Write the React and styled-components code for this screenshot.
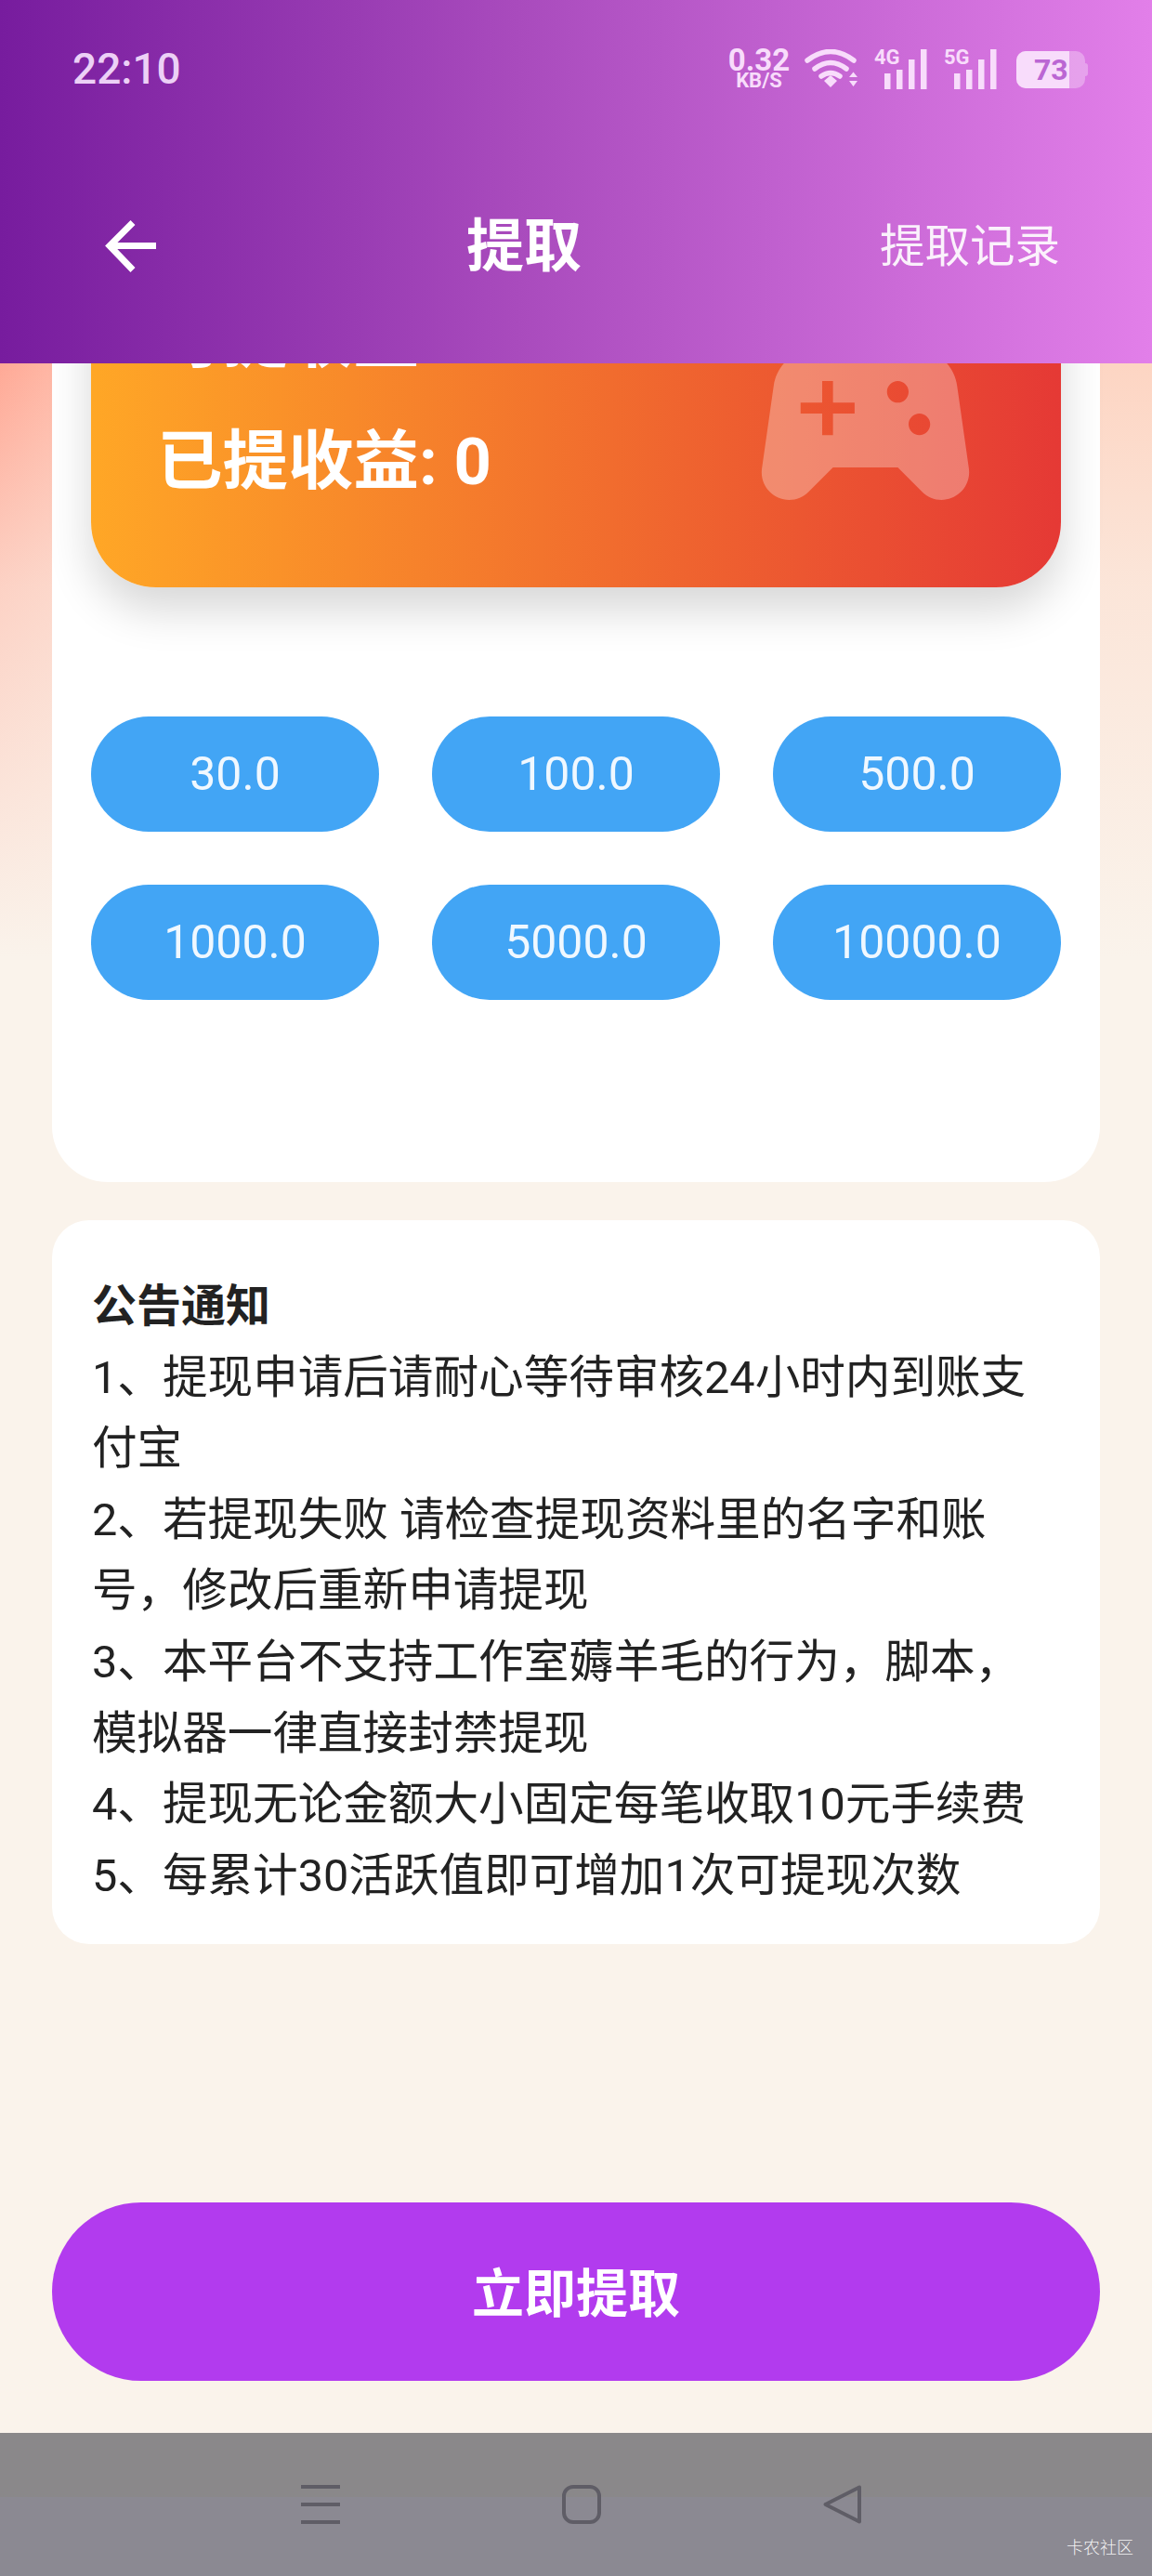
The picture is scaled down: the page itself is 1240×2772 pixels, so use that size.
import React from 'react';
import styled, { createGlobalStyle } from 'styled-components';

const Global = createGlobalStyle`
  html, body { margin: 0; padding: 0; background: #faf3eb; }
  * { box-sizing: border-box; }
`;

const FONT = `Roboto, "Noto Sans CJK SC", sans-serif`;

const Page = styled.div`
  width: 1240px;
  height: 2772px;
  overflow: hidden;
  display: flex;
  flex-direction: column;
  position: relative;
  font-family: ${FONT};
  background: #faf3eb;
`;

const Header = styled.header`
  height: 391px;
  flex: none;
  position: relative;
  z-index: 2;
  background: linear-gradient(to right, #771c9e 0%, #a94bbd 45%, #e27fe9 100%);
  display: flex;
  flex-direction: column;
`;

const StatusBar = styled.div`
  height: 148px;
  padding: 0 72px 0 78px;
  display: flex;
  align-items: center;
  justify-content: space-between;
  color: #f8dcfb;
`;

const Time = styled.div`
  font-size: 46px;
  font-weight: 500;
  line-height: 1;
  color: #ecd0f6;
`;

const StatusIcons = styled.div`
  display: flex;
  align-items: flex-end;
  height: 44px;
`;

const Speed = styled.div`
  width: 72px;
  margin-right: 13px;
  display: flex;
  flex-direction: column;
  align-items: center;
  font-weight: 700;
  line-height: 1;
`;

const SpeedValue = styled.span`
  font-size: 33px;
  height: 26px;
  line-height: 26px;
`;

const SpeedUnit = styled.span`
  font-size: 22px;
  height: 18px;
  line-height: 18px;
`;

const Signal = styled.div`
  position: relative;
  width: 57px;
  height: 43px;
  margin-left: ${p => p.$gap}px;
`;

const SignalLabel = styled.span`
  position: absolute;
  left: 0;
  top: -2px;
  font-size: 22px;
  line-height: 22px;
  font-weight: 700;
`;

const Battery = styled.div`
  position: relative;
  margin-left: 21px;
  width: 74px;
  height: 40px;
  margin-bottom: 1px;
  border-radius: 10px;
  background: rgba(255, 255, 255, 0.3);
  display: flex;
  align-items: center;
  padding-left: 19px;
`;

const BatteryFill = styled.div`
  position: absolute;
  left: 0;
  top: 0;
  bottom: 0;
  border-radius: 10px 0 0 10px;
  background: #f8dcfb;
`;

const BatteryNub = styled.div`
  position: absolute;
  left: 74px;
  top: 13px;
  width: 3px;
  height: 14px;
  border-radius: 0 3px 3px 0;
  background: rgba(255, 255, 255, 0.3);
`;

const BatteryText = styled.span`
  position: relative;
  font-size: 32px;
  font-weight: 700;
  line-height: 1;
  color: #bb66d3;
`;

const TitleBar = styled.div`
  height: 234px;
  padding: 0 99px 0 113px;
  display: flex;
  align-items: center;
  justify-content: space-between;
  color: #fff;
`;

const BackButton = styled.button`
  width: 68px;
  height: 56px;
  padding: 0;
  border: 0;
  background: none;
  color: #fff;
  display: flex;
`;

const Title = styled.h1`
  margin: 0;
  padding-top: 2px;
  font-size: 62px;
  font-weight: 700;
  line-height: 1;
`;

const RecordLink = styled.span`
  font-size: 48.5px;
  font-weight: 400;
  line-height: 1;
  padding-top: 3px;
  color: rgba(255, 255, 255, 0.9);
`;

const Scroll = styled.main`
  flex: 1;
  min-height: 0;
  overflow: hidden;
  position: relative;
  padding: 0 56px;
  background:
    linear-gradient(to bottom, rgba(250, 243, 235, 0) 0, rgba(250, 243, 235, 0.55) 240px, #faf3eb 640px),
    linear-gradient(to right, #ffa996 0, #ffb6a4 56px, #fdd5c3 1184px, #fdd5c3 100%);
`;

const ScrollInner = styled.div`
  margin-top: -181px;
  display: flex;
  flex-direction: column;
`;

const WithdrawPanel = styled.section`
  background: #fff;
  border-radius: 60px;
  padding: 40px 42px 196px;
`;

const EarningsCard = styled.div`
  position: relative;
  height: 382px;
  border-radius: 70px;
  padding: 75px 0 0 71px;
  background: linear-gradient(to right, #ffa726 0%, #e53935 100%);
  box-shadow: 0 24px 48px rgba(0, 0, 0, 0.16);
  color: #fff;
  display: flex;
  flex-direction: column;
  gap: 49px;
`;

const EarningsLine = styled.div`
  font-size: 70.5px;
  font-weight: 700;
  line-height: 82px;
`;

const GameIcon = styled.svg`
  position: absolute;
  right: 71px;
  bottom: 36px;
  width: 279px;
  height: 279px;
  fill: rgba(255, 255, 255, 0.3);
`;

const Amounts = styled.div`
  margin-top: 139px;
  display: grid;
  grid-template-columns: repeat(3, 310px);
  justify-content: space-between;
  row-gap: 57px;
`;

const Amount = styled.button`
  height: 124px;
  border: 0;
  border-radius: 62px;
  background: #42a5f5;
  color: rgba(255, 255, 255, 0.92);
  font-family: ${FONT};
  font-size: 50px;
  font-weight: 400;
  padding: 0;
`;

const NoticePanel = styled.section`
  margin-top: 41px;
  background: #fff;
  border-radius: 40px;
  padding: 55px 54px 35px 43px;
  color: #222;
  font-size: 48.6px;
  line-height: 76.6px;
`;

const NoticeTitle = styled.h2`
  margin: 0;
  font-size: 48px;
  line-height: 76.6px;
  font-weight: 700;
`;

const NoticeLine = styled.p`
  margin: 0;
`;

const SubmitButton = styled.button`
  display: block;
  width: 100%;
  height: 192px;
  margin-top: 278px;
  border: 0;
  border-radius: 96px;
  background: #b23bee;
  color: #fff;
  font-family: ${FONT};
  font-size: 56px;
  font-weight: 700;
  padding: 0 0 5px;
`;

const NavBar = styled.nav`
  flex: none;
  height: 154px;
  position: relative;
  padding: 56px 0 0 324px;
  display: flex;
  align-items: flex-start;
  gap: 239px;
  background: linear-gradient(to bottom, #8a888a 0, #8a888a 69px, #8b8992 69px, #8b8992 100%);
`;

const NavIcon = styled.svg`
  width: 42px;
  height: 42px;
  flex: none;
  overflow: visible;
  fill: none;
  stroke: #5f5d66;
  stroke-width: 4;
  stroke-linejoin: round;
`;

const Watermark = styled.span`
  position: absolute;
  right: 20px;
  bottom: 19px;
  font-size: 18px;
  line-height: 22px;
  font-weight: 300;
  color: rgba(255, 255, 255, 0.9);
`;

const BARS = [[11, 26, 17], [24, 22, 21], [37, 11, 32], [50, 0, 43]];

const SignalIcon = ({ label, gap }) => (
  <Signal $gap={gap}>
    <SignalLabel>{label}</SignalLabel>
    <svg width="57" height="43" viewBox="0 0 57 43" fill="currentColor">
      {BARS.map(([x, y, h]) => <rect key={x} x={x} y={y} width="6.5" height={h} />)}
    </svg>
  </Signal>
);

const notices = [
  '1、提现申请后请耐心等待审核24小时内到账支付宝',
  '2、若提现失败 请检查提现资料里的名字和账号，修改后重新申请提现',
  '3、本平台不支持工作室薅羊毛的行为，脚本，模拟器一律直接封禁提现',
  '4、提现无论金额大小固定每笔收取10元手续费',
  '5、每累计30活跃值即可增加1次可提现次数',
];

const amounts = ['30.0', '100.0', '500.0', '1000.0', '5000.0', '10000.0'];

export default function App() {
  return (
    <Page>
      <Global />
      <Header>
        <StatusBar>
          <Time>22:10</Time>
          <StatusIcons>
            <Speed>
              <SpeedValue>0.32</SpeedValue>
              <SpeedUnit>KB/S</SpeedUnit>
            </Speed>
            <svg width="58" height="43" viewBox="0 0 58 43" fill="none" stroke="currentColor" strokeWidth="5.5" strokeLinecap="round">
              <path d="M3 12 Q28 -7 53 12" />
              <path d="M11 21 Q28 8 45 21" />
              <path d="M18 29 Q28 22 38 29" />
              <path d="M21 34 L28 28 L35 34 L28 41 Z" fill="currentColor" stroke="none" />
              <path d="M48 30 L52.5 24.5 L57 30 Z M48 34 L57 34 L52.5 40 Z" fill="currentColor" stroke="none" />
            </svg>
            <SignalIcon label="4G" gap={17} />
            <SignalIcon label="5G" gap={18} />
            <Battery>
              <BatteryFill style={{ width: `${(73 / 100) * 78}px` }} />
              <BatteryNub />
              <BatteryText>73</BatteryText>
            </Battery>
          </StatusIcons>
        </StatusBar>
        <TitleBar>
          <BackButton aria-label="返回">
            <svg width="55" height="56" viewBox="0 0 55 56" fill="none" stroke="currentColor" strokeWidth="7">
              <path d="M55 27.5 H6" />
              <path d="M30 2.5 L5 27.5 L30 53.5" />
            </svg>
          </BackButton>
          <Title>提取</Title>
          <RecordLink>提取记录</RecordLink>
        </TitleBar>
      </Header>
      <Scroll>
        <ScrollInner>
          <WithdrawPanel>
            <EarningsCard>
              <EarningsLine>可提收益: 0</EarningsLine>
              <EarningsLine>已提收益: 0</EarningsLine>
              <GameIcon viewBox="0 0 24 24">
                <path d="M21.58 16.09l-1.09-7.66C20.21 6.46 18.52 5 16.53 5H7.47C5.48 5 3.79 6.46 3.51 8.43l-1.09 7.66C2.2 17.63 3.39 19 4.94 19c.68 0 1.32-.27 1.8-.75L9 16h6l2.25 2.25c.48.48 1.13.75 1.8.75 1.56 0 2.75-1.37 2.53-2.91zM11 11H9v2H8v-2H6v-1h2V8h1v2h2v1zm4-1c-.55 0-1-.45-1-1s.45-1 1-1 1 .45 1 1-.45 1-1 1zm2 3c-.55 0-1-.45-1-1s.45-1 1-1 1 .45 1 1-.45 1-1 1z" />
              </GameIcon>
            </EarningsCard>
            <Amounts>
              {amounts.map(a => <Amount key={a}>{a}</Amount>)}
            </Amounts>
          </WithdrawPanel>
          <NoticePanel>
            <NoticeTitle>公告通知</NoticeTitle>
            {notices.map(n => <NoticeLine key={n}>{n}</NoticeLine>)}
          </NoticePanel>
          <SubmitButton>立即提取</SubmitButton>
        </ScrollInner>
      </Scroll>
      <NavBar>
        <NavIcon viewBox="0 0 42 42">
          <path d="M0 2 H42 M0 21 H42 M0 40 H42" />
        </NavIcon>
        <NavIcon viewBox="0 0 42 42">
          <rect x="2" y="2" width="38" height="38" rx="10" />
        </NavIcon>
        <NavIcon viewBox="0 0 42 42">
          <path d="M39 2.5 V39.5 L2.5 21 Z" strokeLinejoin="round" />
        </NavIcon>
        <Watermark>卡农社区</Watermark>
      </NavBar>
    </Page>
  );
}
